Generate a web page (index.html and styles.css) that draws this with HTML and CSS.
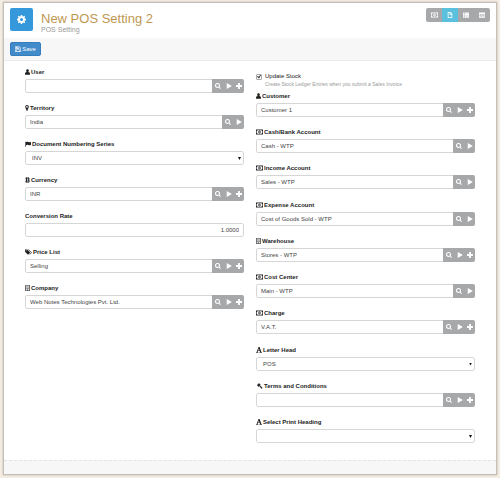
FILE: index.html
```html
<!DOCTYPE html>
<html lang="en">
<head>
<meta charset="utf-8">
<title>New POS Setting 2</title>
<link rel="stylesheet" href="styles.css">
</head>
<body>
<svg class="sprite" aria-hidden="true">
  <symbol id="i-cog" viewBox="0 0 16 16"><path fill-rule="evenodd" d="M6.800 0h2.400l.4 2.100 1.500.6L12.900 1.500l1.700 1.700-1.300 1.700.6 1.500 2.100.4v2.400l-2.100.4-.6 1.500 1.300 1.700-1.700 1.700-1.800-1.200-1.500.6L9.200 16H6.800l-.4-2.100-1.500-.6-1.800 1.200-1.700-1.700 1.300-1.700-.6-1.500L0 9.200V6.800l2.100-.4.6-1.500-1.300-1.700 1.700-1.700 1.800 1.200 1.500-.6zM8 5.300a2.700 2.700 0 1 0 0 5.400 2.700 2.700 0 0 0 0-5.400z"/></symbol>
  <symbol id="i-money" viewBox="0 0 20 16"><path fill-rule="evenodd" d="M0 1h20v14H0zM2 5v6c1.300 0 2 .8 2 2h12c0-1.200.7-2 2-2V5c-1.300 0-2-.8-2-2H4c0 1.200-.7 2-2 2z"/><path fill-rule="evenodd" d="M10 3.800c2.200 0 3.300 1.900 3.300 4.200s-1.100 4.200-3.300 4.200S6.700 10.300 6.700 8 7.800 3.800 10 3.800zM9.300 6v4h1.500V6z"/></symbol>
  <symbol id="i-file" viewBox="0 0 16 16"><path fill-rule="evenodd" d="M2 0h8l4 4v12H2zM4 2v12h8V7H7V2zM9 2v3h3z"/></symbol>
  <symbol id="i-list" viewBox="0 0 16 16"><path d="M0 1h3v3H0zM4 1h12v3H4zM0 4.700h3v3H0zM4 4.700h12v3H4zM0 8.400h3v3H0zM4 8.400h12v3H4zM0 12.100h3v3H0zM4 12.100h12v3H4z"/></symbol>
  <symbol id="i-table" viewBox="0 0 16 16"><path fill-rule="evenodd" d="M0 1h16v14H0zM1.500 5.500v2h3.500v-2zM6.200 5.500v2h3.600v-2zM11 5.500v2h3.500v-2zM1.500 8.700v2h3.500v-2zM6.200 8.700v2h3.600v-2zM11 8.700v2h3.500v-2zM1.500 12v1.500h3.500V12zM6.200 12v1.500h3.600V12zM11 12v1.500h3.500V12z"/></symbol>
  <symbol id="i-save" viewBox="0 0 16 16"><path fill-rule="evenodd" d="M0 1h12l4 4v10H0zM1.500 2.500v11H3V9h10v4.500h1.500V5.700L11.400 2.500H11V7H3V2.500zM7 2.500v3h2.500v-3zM4.500 10.500v3h7v-3z"/></symbol>
  <symbol id="i-user" viewBox="1 0 14 16"><path d="M8 0c2.400 0 3.800 1.700 3.800 4.200 0 1.700-.7 3.200-1.800 4 3.500.3 5 1.800 5 5V14c0 1.200-.8 2-2 2H3c-1.200 0-2-.8-2-2v-.8c0-3.200 1.500-4.700 5-5-1.100-.8-1.800-2.300-1.800-4C4.200 1.700 5.600 0 8 0z"/></symbol>
  <symbol id="i-pin" viewBox="0 0 10 16"><path fill-rule="evenodd" d="M5 0a4.800 4.800 0 0 1 4.800 4.800c0 1-.3 1.800-.7 2.600L6 15.200c-.4.9-1.600.9-2 0L.9 7.400A5.500 5.500 0 0 1 .2 4.800 4.800 4.800 0 0 1 5 0zm0 2.600a2.200 2.200 0 1 0 0 4.500 2.200 2.200 0 0 0 0-4.500z"/></symbol>
  <symbol id="i-flag" viewBox="0 0 18 16"><path d="M0 1h2v15H0zM3 2.500c3-2 5-1.500 7.500-.3C13 3.300 15 3 18 1v9c-3 2-5 2.200-7.500 1-2.500-1.200-4.500-1-7.500.8z"/></symbol>
  <symbol id="i-bitcoin" viewBox="0 0 12 16"><path fill-rule="evenodd" d="M3.500 0h1.700v2H7V0h1.700v2.200c2 .4 2.800 1.300 2.800 2.900 0 1.300-.6 2.100-1.700 2.600 1.500.4 2.200 1.400 2.200 2.900 0 2-1.200 3.100-3.300 3.400v2H7v-2H5.200v2H3.500v-2H0v-2h1.500V4H0V2h3.500zM4.500 4v3h2c1.300 0 2-.5 2-1.500S7.800 4 6.500 4zM4.500 9v3H7c1.300 0 2-.5 2-1.500S8.300 9 7 9z"/></symbol>
  <symbol id="i-tags" viewBox="0 0 20 16"><path fill-rule="evenodd" d="M0 1h6.500L14 8.500c.6.600.6 1.400 0 2L9.500 15c-.6.600-1.400.6-2 0L0 7.500zM3.200 2.700a1.400 1.400 0 1 0 0 2.800 1.400 1.400 0 0 0 0-2.800z"/><path d="M8.500 1h2L18.700 8.500c.6.600.6 1.400 0 2L14.300 15c-.6.600-1.300.6-1.900.1L16.500 10.500c.5-.6.5-1.400 0-2z"/></symbol>
  <symbol id="i-building" viewBox="0 0 14 16"><path fill-rule="evenodd" d="M0 0h14v16H0zM1.800 1.500v13H5V12h4v2.500h3.200v-13z"/><path d="M3 3h1.700v1.500H3zM6.200 3h1.700v1.500H6.200zM9.300 3H11v1.500H9.300zM3 6h1.700v1.500H3zM6.200 6h1.700v1.500H6.200zM9.300 6H11v1.500H9.300zM3 9h1.700v1.500H3zM6.200 9h1.700v1.500H6.200zM9.300 9H11v1.500H9.300z"/></symbol>
  <symbol id="i-font" viewBox="0 0 16 16"><path fill-rule="evenodd" d="M6.800 0h2.900l4.500 13.500 1.800.5v1.500H9V14l1.800-.5-1-3H5.200l-1 3 2 .5v1.500H0V14l1.700-.5zM7.400 4L5.800 9h3.500z"/></symbol>
  <symbol id="i-legal" viewBox="0 0 16 16"><path d="M6.300 0l5.200 5.200-1.300 1.300-.7-.3-1 1 1.200 1.200 1-.9 5 5c.6.600.6 1.200 0 1.800l-.6.600c-.6.600-1.200.6-1.800 0l-5-5 .9-1L8 7.700l-1 1 .3.800L6 10.800.8 5.600l1.300-1.300.8.300 3-3-.9-.3z"/></symbol>
  <symbol id="i-search" viewBox="0 0 16 16"><path fill-rule="evenodd" d="M6.700 0a6.700 6.700 0 0 1 5.500 10.400l3.800 3.600-2.200 2.100-3.600-3.800A6.700 6.700 0 1 1 6.700 0zm0 2.800a3.900 3.900 0 1 0 0 7.800 3.900 3.900 0 0 0 0-7.800z"/></symbol>
  <symbol id="i-play" viewBox="0 0 16 16"><path d="M2 0L15.500 8 2 16z"/></symbol>
  <symbol id="i-plus" viewBox="0 0 16 16"><path d="M5.500 0h5v5.500H16v5h-5.500V16h-5v-5.500H0v-5h5.500z"/></symbol>
</svg>

<div class="window">
  <header class="titlebar">
    <span class="app-icon"><svg class="icon icon-large"><use href="#i-cog"/></svg></span>
    <div class="titles">
      <h1>New POS Setting 2</h1>
      <p>POS Setting</p>
    </div>
    <nav class="views" aria-label="Views">
      <button type="button" aria-label="Accounts"><svg class="icon icon-wide"><use href="#i-money"/></svg></button>
      <button type="button" class="active" aria-label="Form"><svg class="icon"><use href="#i-file"/></svg></button>
      <button type="button" aria-label="List"><svg class="icon"><use href="#i-list"/></svg></button>
      <button type="button" aria-label="Report"><svg class="icon"><use href="#i-table"/></svg></button>
    </nav>
  </header>

  <div class="toolbar">
    <button type="button" class="save"><svg class="icon"><use href="#i-save"/></svg>Save</button>
  </div>

  <form class="form">
    <div class="column">
      <div class="field">
        <label for="user"><svg class="icon icon-small"><use href="#i-user"/></svg>User</label>
        <div class="control"><input id="user" type="text"><button type="button" class="find" aria-label="Search"><svg class="icon"><use href="#i-search"/></svg></button><button type="button" aria-label="Open"><svg class="icon"><use href="#i-play"/></svg></button><button type="button" aria-label="New"><svg class="icon"><use href="#i-plus"/></svg></button></div>
      </div>
      <div class="field">
        <label for="territory"><svg class="icon icon-narrow"><use href="#i-pin"/></svg>Territory</label>
        <div class="control"><input id="territory" type="text" value="India"><button type="button" class="find" aria-label="Search"><svg class="icon"><use href="#i-search"/></svg></button><button type="button" aria-label="Open"><svg class="icon"><use href="#i-play"/></svg></button></div>
      </div>
      <div class="field">
        <label for="series"><svg class="icon"><use href="#i-flag"/></svg>Document Numbering Series</label>
        <div class="control dropdown"><select id="series"><option>INV</option></select></div>
      </div>
      <div class="field">
        <label for="currency"><svg class="icon icon-small"><use href="#i-bitcoin"/></svg>Currency</label>
        <div class="control"><input id="currency" type="text" value="INR"><button type="button" class="find" aria-label="Search"><svg class="icon"><use href="#i-search"/></svg></button><button type="button" aria-label="Open"><svg class="icon"><use href="#i-play"/></svg></button><button type="button" aria-label="New"><svg class="icon"><use href="#i-plus"/></svg></button></div>
      </div>
      <div class="field">
        <label for="rate">Conversion Rate</label>
        <div class="control"><input id="rate" class="number" type="text" value="1.0000"></div>
      </div>
      <div class="field">
        <label for="price-list"><svg class="icon icon-wide"><use href="#i-tags"/></svg>Price List</label>
        <div class="control"><input id="price-list" type="text" value="Selling"><button type="button" class="find" aria-label="Search"><svg class="icon"><use href="#i-search"/></svg></button><button type="button" aria-label="Open"><svg class="icon"><use href="#i-play"/></svg></button><button type="button" aria-label="New"><svg class="icon"><use href="#i-plus"/></svg></button></div>
      </div>
      <div class="field">
        <label for="company"><svg class="icon icon-small"><use href="#i-building"/></svg>Company</label>
        <div class="control"><input id="company" type="text" value="Web Notes Technologies Pvt. Ltd."><button type="button" class="find" aria-label="Search"><svg class="icon"><use href="#i-search"/></svg></button><button type="button" aria-label="Open"><svg class="icon"><use href="#i-play"/></svg></button><button type="button" aria-label="New"><svg class="icon"><use href="#i-plus"/></svg></button></div>
      </div>
    </div>

    <div class="column">
      <div class="check">
        <input id="update-stock" type="checkbox" checked aria-describedby="stock-help">
        <label for="update-stock">Update Stock</label>
        <p id="stock-help">Create Stock Ledger Entries when you submit a Sales Invoice</p>
      </div>
      <div class="fields">
        <div class="field">
          <label for="customer"><svg class="icon icon-small"><use href="#i-user"/></svg>Customer</label>
          <div class="control"><input id="customer" type="text" value="Customer 1"><button type="button" class="find" aria-label="Search"><svg class="icon"><use href="#i-search"/></svg></button><button type="button" aria-label="Open"><svg class="icon"><use href="#i-play"/></svg></button><button type="button" aria-label="New"><svg class="icon"><use href="#i-plus"/></svg></button></div>
        </div>
        <div class="field">
          <label for="cash"><svg class="icon icon-wide"><use href="#i-money"/></svg>Cash/Bank Account</label>
          <div class="control"><input id="cash" type="text" value="Cash - WTP"><button type="button" class="find" aria-label="Search"><svg class="icon"><use href="#i-search"/></svg></button><button type="button" aria-label="Open"><svg class="icon"><use href="#i-play"/></svg></button></div>
        </div>
        <div class="field">
          <label for="income"><svg class="icon icon-wide"><use href="#i-money"/></svg>Income Account</label>
          <div class="control"><input id="income" type="text" value="Sales - WTP"><button type="button" class="find" aria-label="Search"><svg class="icon"><use href="#i-search"/></svg></button><button type="button" aria-label="Open"><svg class="icon"><use href="#i-play"/></svg></button></div>
        </div>
        <div class="field">
          <label for="expense"><svg class="icon icon-wide"><use href="#i-money"/></svg>Expense Account</label>
          <div class="control"><input id="expense" type="text" value="Cost of Goods Sold - WTP"><button type="button" class="find" aria-label="Search"><svg class="icon"><use href="#i-search"/></svg></button><button type="button" aria-label="Open"><svg class="icon"><use href="#i-play"/></svg></button></div>
        </div>
        <div class="field">
          <label for="warehouse"><svg class="icon icon-small"><use href="#i-building"/></svg>Warehouse</label>
          <div class="control"><input id="warehouse" type="text" value="Stores - WTP"><button type="button" class="find" aria-label="Search"><svg class="icon"><use href="#i-search"/></svg></button><button type="button" aria-label="Open"><svg class="icon"><use href="#i-play"/></svg></button><button type="button" aria-label="New"><svg class="icon"><use href="#i-plus"/></svg></button></div>
        </div>
        <div class="field">
          <label for="cost-center"><svg class="icon icon-wide"><use href="#i-money"/></svg>Cost Center</label>
          <div class="control"><input id="cost-center" type="text" value="Main - WTP"><button type="button" class="find" aria-label="Search"><svg class="icon"><use href="#i-search"/></svg></button><button type="button" aria-label="Open"><svg class="icon"><use href="#i-play"/></svg></button></div>
        </div>
        <div class="field">
          <label for="charge"><svg class="icon icon-wide"><use href="#i-money"/></svg>Charge</label>
          <div class="control"><input id="charge" type="text" value="V.A.T."><button type="button" class="find" aria-label="Search"><svg class="icon"><use href="#i-search"/></svg></button><button type="button" aria-label="Open"><svg class="icon"><use href="#i-play"/></svg></button><button type="button" aria-label="New"><svg class="icon"><use href="#i-plus"/></svg></button></div>
        </div>
        <div class="field">
          <label for="letter-head"><svg class="icon"><use href="#i-font"/></svg>Letter Head</label>
          <div class="control dropdown"><select id="letter-head"><option>POS</option></select></div>
        </div>
        <div class="field">
          <label for="terms"><svg class="icon icon-wide"><use href="#i-legal"/></svg>Terms and Conditions</label>
          <div class="control"><input id="terms" type="text"><button type="button" class="find" aria-label="Search"><svg class="icon"><use href="#i-search"/></svg></button><button type="button" aria-label="Open"><svg class="icon"><use href="#i-play"/></svg></button><button type="button" aria-label="New"><svg class="icon"><use href="#i-plus"/></svg></button></div>
        </div>
        <div class="field">
          <label for="heading"><svg class="icon"><use href="#i-font"/></svg>Select Print Heading</label>
          <div class="control dropdown"><select id="heading"><option></option></select></div>
        </div>
      </div>
    </div>
  </form>

  <footer class="footer"></footer>
</div>
</body>
</html>
```

FILE: styles.css
```css
* {
  box-sizing: border-box;
}

body {
  display: flex;
  flex-direction: column;
  min-height: 100vh;
  margin: 0;
  padding: 2px 3px 3px;
  background: #f5ede3;
  color: #222;
  font: 6px/8px "Liberation Sans", Arial, sans-serif;
}

h1,
p {
  margin: 0;
  font-weight: normal;
}

button,
input,
select {
  margin: 0;
  font: inherit;
}

button {
  display: flex;
  align-items: center;
  justify-content: center;
  padding: 0;
  border: 0;
  color: #fff;
}

.sprite {
  display: none;
}

.icon {
  flex: none;
  width: 6px;
  height: 6px;
  fill: currentColor;
}

.icon-small {
  width: 5px;
}

.icon-narrow {
  width: 4px;
}

.icon-wide {
  width: 7px;
}

.icon-large {
  width: 9px;
  height: 9px;
}

.window {
  display: flex;
  flex: 1;
  flex-direction: column;
  border: 1px solid #c4bfb6;
  background: #fff;
  box-shadow: 0 0 2px #b9b2a8;
}

.titlebar {
  display: flex;
  align-items: flex-start;
  gap: 8px;
  height: 35px;
  padding: 5px 6px;
}

.app-icon {
  display: flex;
  align-items: center;
  justify-content: center;
  width: 23px;
  height: 23px;
  border-radius: 2px;
  background: #3498db;
  color: #fff;
}

.titles {
  flex: 1;
  padding-top: 4px;
}

.titles h1 {
  color: #c09853;
  font-size: 13px;
  line-height: 14px;
}

.titles p {
  color: #999;
  font-size: 7px;
  line-height: 8px;
}

.views {
  display: flex;
  overflow: hidden;
  border-radius: 2px;
}

.views button {
  width: 16px;
  height: 14px;
  background: #a6a8aa;
}

.views .active {
  background: #5bc0de;
}

.toolbar {
  padding: 4px 6px;
  border-bottom: 1px solid #ebebeb;
  background: #f7f7f7;
}

.save {
  gap: 1px;
  width: 31px;
  height: 14px;
  border: 1px solid #357ebd;
  border-radius: 2px;
  background: #428bca;
}

.form {
  display: grid;
  flex: 1;
  grid-template-columns: 1fr 1fr;
  gap: 12px;
  padding: 7px 21px 17px;
}

.column {
  display: flex;
  flex-direction: column;
  gap: 11px;
}

.column:last-child {
  gap: 4px;
  padding-top: 4px;
}

.fields {
  display: flex;
  flex: 1;
  flex-direction: column;
  justify-content: space-between;
}

.field label {
  display: flex;
  align-items: center;
  gap: 1px;
  margin-bottom: 3px;
  font-weight: bold;
}

.control {
  display: flex;
  overflow: hidden;
  height: 14px;
  border-radius: 2px;
}

.control input,
.control select {
  flex: 1;
  min-width: 0;
  padding: 0 4px;
  border: 1px solid #d6d6d6;
  border-radius: 2px;
  background: #fff;
  color: #444;
}

.control input:not(:last-child) {
  border-right: 0;
  border-radius: 2px 0 0 2px;
}

.control .number {
  text-align: right;
}

.control button {
  width: 10px;
  background: #a6a8aa;
}

.control .find {
  width: 12px;
}

.dropdown {
  position: relative;
}

.control select {
  padding: 0 6px;
  appearance: none;
}

.dropdown::after {
  position: absolute;
  top: 6px;
  right: 3px;
  width: 3px;
  height: 3px;
  background: #111;
  clip-path: polygon(0 0, 100% 0, 50% 100%);
  content: "";
  pointer-events: none;
}

.check {
  display: grid;
  grid-template-columns: 6px 1fr;
  align-items: center;
  column-gap: 3px;
}

.check input {
  display: grid;
  width: 6px;
  height: 6px;
  border: 1px solid #aaa;
  border-radius: 1px;
  background: #fff;
  appearance: none;
}

.check input:checked::before {
  background: #222;
  clip-path: polygon(0 50%, 25% 35%, 45% 60%, 85% 0, 100% 15%, 50% 100%);
  content: "";
}

.check label {
  line-height: 9px;
}

.check p {
  grid-column: 2;
  color: #999;
  font-size: 5px;
  line-height: 7px;
}

.footer {
  height: 14px;
  border-top: 1px dashed #e3e3e3;
  background: #f7f7f7;
}
```
